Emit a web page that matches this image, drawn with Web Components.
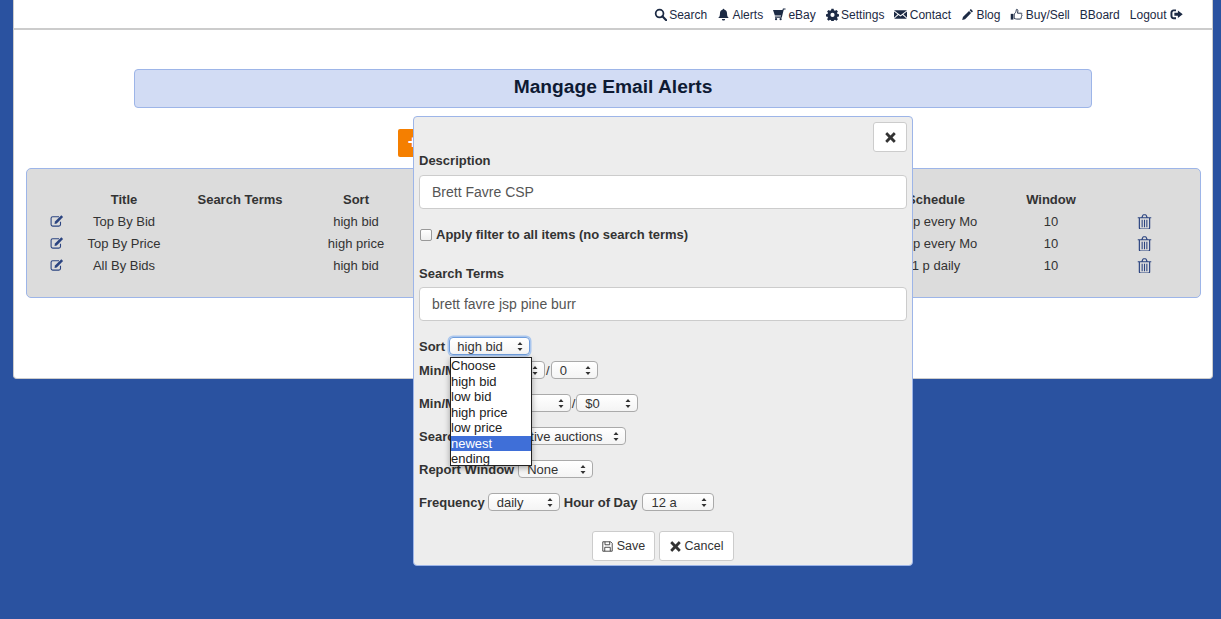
<!DOCTYPE html>
<html>
<head>
<meta charset="utf-8">
<title>Manage Email Alerts</title>
<style>
html, body { margin: 0; height: 100%; }
body {
  background: #2a52a0;
  font-family: "Liberation Sans", Arial, sans-serif;
  font-size: 13px;
  color: #333;
  overflow: hidden;
}
</style>
</head>
<body>
<alerts-page>
  <top-nav slot="nav"></top-nav>
  <title-bar slot="title">Mangage Email Alerts</title-bar>
  <alerts-table slot="table"></alerts-table>
  <alert-modal slot="modal"></alert-modal>
</alerts-page>

<script>
const ICONS = {
  search: '<circle cx="6" cy="6" r="4.2" fill="none" stroke="currentColor" stroke-width="1.9"/><path d="M9 9l4.2 4.2" stroke="currentColor" stroke-width="2.3" stroke-linecap="round"/>',
  bell: '<path d="M7 0.8c.6 0 1 .4 1 1 2 .5 2.800 2 2.800 4 0 2.800.8 3.800 1.900 5H1.300c1.100-1.200 1.900-2.200 1.900-5 0-2 .8-3.500 2.800-4 0-.6.4-1 1-1z"/><path d="M5.300 11.800h3.400c0 1-.7 1.700-1.700 1.700s-1.700-.7-1.700-1.700z"/>',
  cart: '<path d="M0 2.200h10.200l.5-1.700h2.800v1.200h-1.900L9.400 10.400H2.200l-.2-1.200h6.400l.3-1.200H2z"/><circle cx="3.300" cy="12" r="1.200"/><circle cx="8.200" cy="12" r="1.200"/>',
  cog: '<path fill-rule="evenodd" d="M5.700 0h2.600l.4 2 1.300.6 1.700-1.100 1.800 1.800-1.100 1.700.6 1.300 2 .4v2.600l-2 .4-.6 1.300 1.100 1.700-1.800 1.800-1.700-1.100-1.300.6-.4 2H5.700l-.4-2-1.300-.6-1.700 1.100L.5 12.700l1.100-1.700-.6-1.300-2-.4V6.700l2-.4.6-1.300L.5 3.300l1.800-1.800L4 2.600l1.300-.6zM7 5a2.500 2.500 0 1 0 0 5 2.500 2.500 0 0 0 0-5z" transform="translate(.7 .7) scale(.9)"/>',
  envelope: '<path d="M0 2.500h14L7 7.800z"/><path d="M0 3.800l3.900 3L0 10.500z"/><path d="M14 3.800l-3.900 3 3.900 3.700z"/><path d="M4.800 7.500L7 9.200l2.200-1.700 4.600 4H.2z"/>',
  pencil: '<path d="M10.600 1.200l2.300 2.300-1.300 1.300-2.300-2.300z"/><path d="M8.600 3.200l2.300 2.300-6.500 6.500-3.100.9.800-3.200z"/>',
  thumb: '<path fill="none" stroke="currentColor" stroke-width="1" d="M4.500 6.500c1.300-.8 2-2.200 2.300-4.600.1-.9 1.800-.6 1.700 1.100l-.4 2.600h4c1 0 1 1.300.3 1.600.7.400.6 1.500-.2 1.700.5.500.3 1.400-.4 1.600.3.600 0 1.400-.9 1.400H7.200c-1.100 0-1.700-.6-2.700-.6z"/><path d="M.8 6.300h2.800v6.200H.8z"/>',
  logout: '<path d="M6.500 1.500H4C1.800 1.500.5 3 .5 5v3.500C.5 10.500 1.800 12 4 12h2.500v-2H4.300C3.200 10 2.600 9.400 2.600 8.300V5.200c0-1.100.6-1.700 1.700-1.700h2.200z"/><path d="M8.500 2.600l5.200 4.100-5.200 4.100V8.400H4.700V5h3.800z"/>',
  edit: '<path fill="none" stroke="currentColor" stroke-width="1.100" d="M10.500 7.800v2.700c0 1-.7 1.600-1.600 1.600H2.700c-1 0-1.600-.7-1.600-1.600V4.300c0-1 .7-1.600 1.600-1.600H9"/><path d="M11.300 1.300l1.800 1.800-6.300 6.300-2.300.5.500-2.300z"/>',
  trash: '<path fill="none" stroke="currentColor" stroke-width="1.100" d="M.7 3.500h12.600M2.200 3.500v9.300c0 .8.500 1.300 1.200 1.300h7.200c.7 0 1.200-.5 1.200-1.300V3.500M4.600 3.300l.8-2c.2-.4.400-.6.800-.6h1.600c.4 0 .6.200.8.600l.8 2"/><path d="M4.300 5.300h1v7h-1zM6.500 5.300h1v7h-1zM8.700 5.300h1v7h-1z"/>',
  x: '<path d="M3.300.7L7 4.400 10.700.7c.3-.3.700-.3 1 0l1.600 1.600c.3.300.3.700 0 1L9.600 7l3.700 3.700c.3.300.3.700 0 1l-1.600 1.600c-.3.300-.7.300-1 0L7 9.600l-3.700 3.700c-.3.300-.7.300-1 0L.7 11.700c-.3-.3-.3-.7 0-1L4.400 7 .7 3.300c-.3-.3-.3-.7 0-1L2.300.7c.3-.3.700-.3 1 0z"/>',
  save: '<path fill="none" stroke="currentColor" stroke-width="1.100" d="M1 1h10l2 2v10H1z"/><path fill="none" stroke="currentColor" stroke-width="1.100" d="M3.800 1v3.800h6V1M3.500 13V8h7v5"/>'
};

function icon(name, size) {
  return `<svg width="${size}" height="${size}" viewBox="0 0 14 14" fill="currentColor" aria-hidden="true">${ICONS[name]}</svg>`;
}

class AlertsPage extends HTMLElement {
  constructor() {
    super();
    this.attachShadow({ mode: 'open' }).innerHTML = `
<style>
:host { display: block; position: relative; height: 619px; }
.sheet {
  margin: 0 8px 0 13px;
  height: 379px;
  box-sizing: border-box;
  background: #fff;
  border: 1px solid #ccc;
  border-top: none;
  border-radius: 0 0 4px 4px;
  display: flex;
  flex-direction: column;
}
.add {
  align-self: flex-start;
  margin: 21px 0 11px 384px;
  width: 30px;
  height: 28px;
  background: #f57f00;
  color: #fff;
  border-radius: 2px;
  font: bold 18px/26px "Liberation Sans", Arial, sans-serif;
  text-align: center;
}
</style>
<div class="sheet">
  <slot name="nav"></slot>
  <slot name="title"></slot>
  <div class="add">+</div>
  <slot name="table"></slot>
</div>
<slot name="modal"></slot>
`;
  }
}

class NavLink extends HTMLElement {
  constructor() {
    super();
    this.attachShadow({ mode: 'open' }).innerHTML = `
<style>
:host { display: inline-flex; align-items: center; gap: 2.300px; color: #1c2a44; font-size: 12px; white-space: nowrap; }
</style>
<slot name="before"></slot><slot></slot><slot name="after"></slot>
`;
  }
}

class TopNav extends HTMLElement {
  constructor() {
    super();
    const links = [
      ['search', 'Search'], ['bell', 'Alerts'], ['cart', 'eBay'], ['cog', 'Settings'],
      ['envelope', 'Contact'], ['pencil', 'Blog'], ['thumb', 'Buy/Sell'], [null, 'BBoard']
    ];
    this.attachShadow({ mode: 'open' }).innerHTML = `
<style>
:host {
  display: flex;
  justify-content: flex-end;
  align-items: center;
  gap: 10px;
  height: 30px;
  box-sizing: border-box;
  padding: 1px 29px 0 0;
  border-bottom: 2px solid #ccc;
}
svg { display: block; }
</style>
${links.map(([ic, text]) => `<nav-link>${ic ? `<span slot="before">${icon(ic, 13)}</span>` : ''}${text}</nav-link>`).join('')}
<nav-link style="gap:3.500px">Logout<span slot="after">${icon('logout', 13)}</span></nav-link>
`;
  }
}

class TitleBar extends HTMLElement {
  constructor() {
    super();
    this.attachShadow({ mode: 'open' }).innerHTML = `
<style>
:host {
  display: block;
  margin: 39px 120px 0 120px;
  height: 39px;
  box-sizing: border-box;
  background: #d2dcf4;
  border: 1px solid #9db5e8;
  border-radius: 4px;
  text-align: center;
  font-size: 19.200px;
  font-weight: bold;
  line-height: 33px;
  color: #0e1a33;
}
</style>
<slot></slot>
`;
  }
}

class AlertsTable extends HTMLElement {
  constructor() {
    super();
    const rows = [
      ['Top By Bid', '', 'high bid', '12 p every Mo', '10'],
      ['Top By Price', '', 'high price', '12 p every Mo', '10'],
      ['All By Bids', '', 'high bid', '1 p daily', '10']
    ];
    this.attachShadow({ mode: 'open' }).innerHTML = `
<style>
:host {
  display: block;
  margin: 0 11px 0 12px;
  height: 130px;
  box-sizing: border-box;
  padding: 20px 0 0 0;
  background: #dcdcdc;
  border: 1px solid #9db5e8;
  border-radius: 5px;
}
.row {
  display: grid;
  grid-template-columns: 60px 74px 158px 74px 488px 110px 120px 66px;
  height: 22px;
  line-height: 22px;
  text-align: center;
  white-space: nowrap;
}
.head { font-weight: bold; }
.ic { color: #2b4480; display: flex; justify-content: center; align-items: center; }
.ic svg { display: block; margin-top: -2px; }
</style>
<div class="row head"><span></span><span>Title</span><span>Search Terms</span><span>Sort</span><span></span><span>Schedule</span><span>Window</span><span></span></div>
${rows.map(r => `<div class="row"><span class="ic">${icon('edit', 14)}</span><span>${r[0]}</span><span>${r[1]}</span><span>${r[2]}</span><span></span><span>${r[3]}</span><span>${r[4]}</span><span class="ic">${icon('trash', 15)}</span></div>`).join('')}
`;
  }
}

class MacSelect extends HTMLElement {
  static get observedAttributes() {
    return ['value', 'width'];
  }
  constructor() {
    super();
    this.attachShadow({ mode: 'open' }).innerHTML = `
<style>
:host {
  display: inline-flex;
  align-items: center;
  justify-content: space-between;
  box-sizing: border-box;
  height: 18px;
  padding: 0 6px 0 8px;
  background: linear-gradient(#fff, #f4f4f4);
  border: 1px solid #aaa;
  border-radius: 4px;
  font-size: 13px;
  font-weight: normal;
  color: #333;
  white-space: nowrap;
  vertical-align: middle;
}
:host([focused]) {
  padding-left: 7px;
  border-color: #6f9ddc;
  box-shadow: 0 0 0 1.500px #a9c6ee;
}
svg { display: block; flex: none; }
</style>
<span class="v"></span>
<svg width="6" height="9" viewBox="0 0 6 9"><path d="M3 0l2.500 3h-5zM3 9L.5 6h5z" fill="#333"/></svg>
`;
  }
  attributeChangedCallback(attrName, oldVal, newVal) {
    switch (attrName) {
      case 'value':
        this.shadowRoot.querySelector('.v').textContent = newVal;
        break;
      case 'width':
        this.style.width = newVal + 'px';
        break;
    }
  }
}

class SelectPopup extends HTMLElement {
  constructor() {
    super();
    const items = ['Choose', 'high bid', 'low bid', 'high price', 'low price', 'newest', 'ending'];
    this.attachShadow({ mode: 'open' }).innerHTML = `
<style>
:host {
  display: block;
  position: absolute;
  left: 36px;
  top: 240px;
  width: 82px;
  height: 109px;
  box-sizing: border-box;
  background: #fff;
  border: 1px solid #222;
  box-shadow: 0 2px 6px rgba(0,0,0,.35);
  font-size: 13px;
  line-height: 15.500px;
  color: #222;
}
div { height: 15.500px; }
.on { background: #3f6fd8; color: #fff; }
</style>
${items.map(t => `<div class="${t === 'newest' ? 'on' : ''}">${t}</div>`).join('')}
`;
  }
}

class AlertModal extends HTMLElement {
  constructor() {
    super();
    this.attachShadow({ mode: 'open' }).innerHTML = `
<style>
:host {
  display: block;
  position: absolute;
  left: 413px;
  top: 116px;
  width: 500px;
  height: 450px;
  box-sizing: border-box;
  padding: 5px;
  background: #ededed;
  border: 1px solid #9db5e8;
  border-radius: 4px;
  font-size: 13px;
  color: #333;
}
.top { display: flex; justify-content: flex-end; height: 30px; }
.btn {
  display: inline-flex;
  align-items: center;
  justify-content: center;
  gap: 4px;
  box-sizing: border-box;
  height: 30px;
  background: #fff;
  border: 1px solid #ccc;
  border-radius: 3px;
  font-size: 12.500px;
}
.close { width: 34px; }
svg { display: block; }
b { font-weight: bold; white-space: nowrap; }
label { display: block; font-weight: bold; line-height: 15px; }
.field {
  box-sizing: border-box;
  height: 34px;
  padding: 0 12px;
  background: #fff;
  border: 1px solid #ccc;
  border-radius: 4px;
  font-size: 14px;
  line-height: 32px;
  color: #555;
}
.check { display: flex; align-items: center; gap: 4px; height: 15px; margin-top: 18px; font-weight: bold; }
.box {
  width: 10px; height: 10px;
  margin-left: 1px;
  background: linear-gradient(#fff, #eee);
  border: 1px solid #999;
  border-radius: 2px;
  flex: none;
}
.line { display: flex; align-items: center; gap: 4px; height: 18px; white-space: nowrap; }
.sort { gap: 4.300px; }
.actions { display: flex; justify-content: center; gap: 4px; margin-top: 20px; }
</style>
<div class="top"><span class="btn close">${icon('x', 11)}</span></div>
<label style="margin-top:1px;margin-bottom:7px">Description</label>
<div class="field">Brett Favre CSP</div>
<div class="check"><span class="box"></span>Apply filter to all items (no search terms)</div>
<label style="margin-top:24px;margin-bottom:6px">Search Terms</label>
<div class="field">brett favre jsp pine burr</div>
<div class="line sort" style="margin-top:16px"><b>Sort</b><mac-select focused value="high bid" width="81"></mac-select></div>
<div class="line" style="margin-top:6px"><b>Min/Max Bids</b><mac-select value="0" width="39"></mac-select><span style="margin:0 -3px">/</span><mac-select value="0" width="47"></mac-select></div>
<div class="line" style="margin-top:15px"><b>Min/Max Price</b><mac-select value="$0" width="64" style="margin-left:-3px"></mac-select><span style="margin:0 -3px">/</span><mac-select value="$0" width="62"></mac-select></div>
<div class="line" style="margin-top:15px"><b>Search Within</b><mac-select value="active auctions" width="118" style="margin-left:-2px"></mac-select></div>
<div class="line" style="margin-top:15px"><b>Report Window</b><mac-select value="None" width="75"></mac-select></div>
<div class="line" style="margin-top:15px"><b>Frequency</b><mac-select value="daily" width="72" style="margin-left:-1px"></mac-select><b>Hour of Day</b><mac-select value="12 a" width="72" style="margin-left:1px"></mac-select></div>
<div class="actions">
  <span class="btn" style="width:63px">${icon('save', 11)}Save</span>
  <span class="btn" style="width:75px">${icon('x', 11)}Cancel</span>
</div>
<select-popup></select-popup>
`;
  }
}

customElements.define('alerts-page', AlertsPage);
customElements.define('nav-link', NavLink);
customElements.define('top-nav', TopNav);
customElements.define('title-bar', TitleBar);
customElements.define('alerts-table', AlertsTable);
customElements.define('mac-select', MacSelect);
customElements.define('select-popup', SelectPopup);
customElements.define('alert-modal', AlertModal);
</script>
</body>
</html>
